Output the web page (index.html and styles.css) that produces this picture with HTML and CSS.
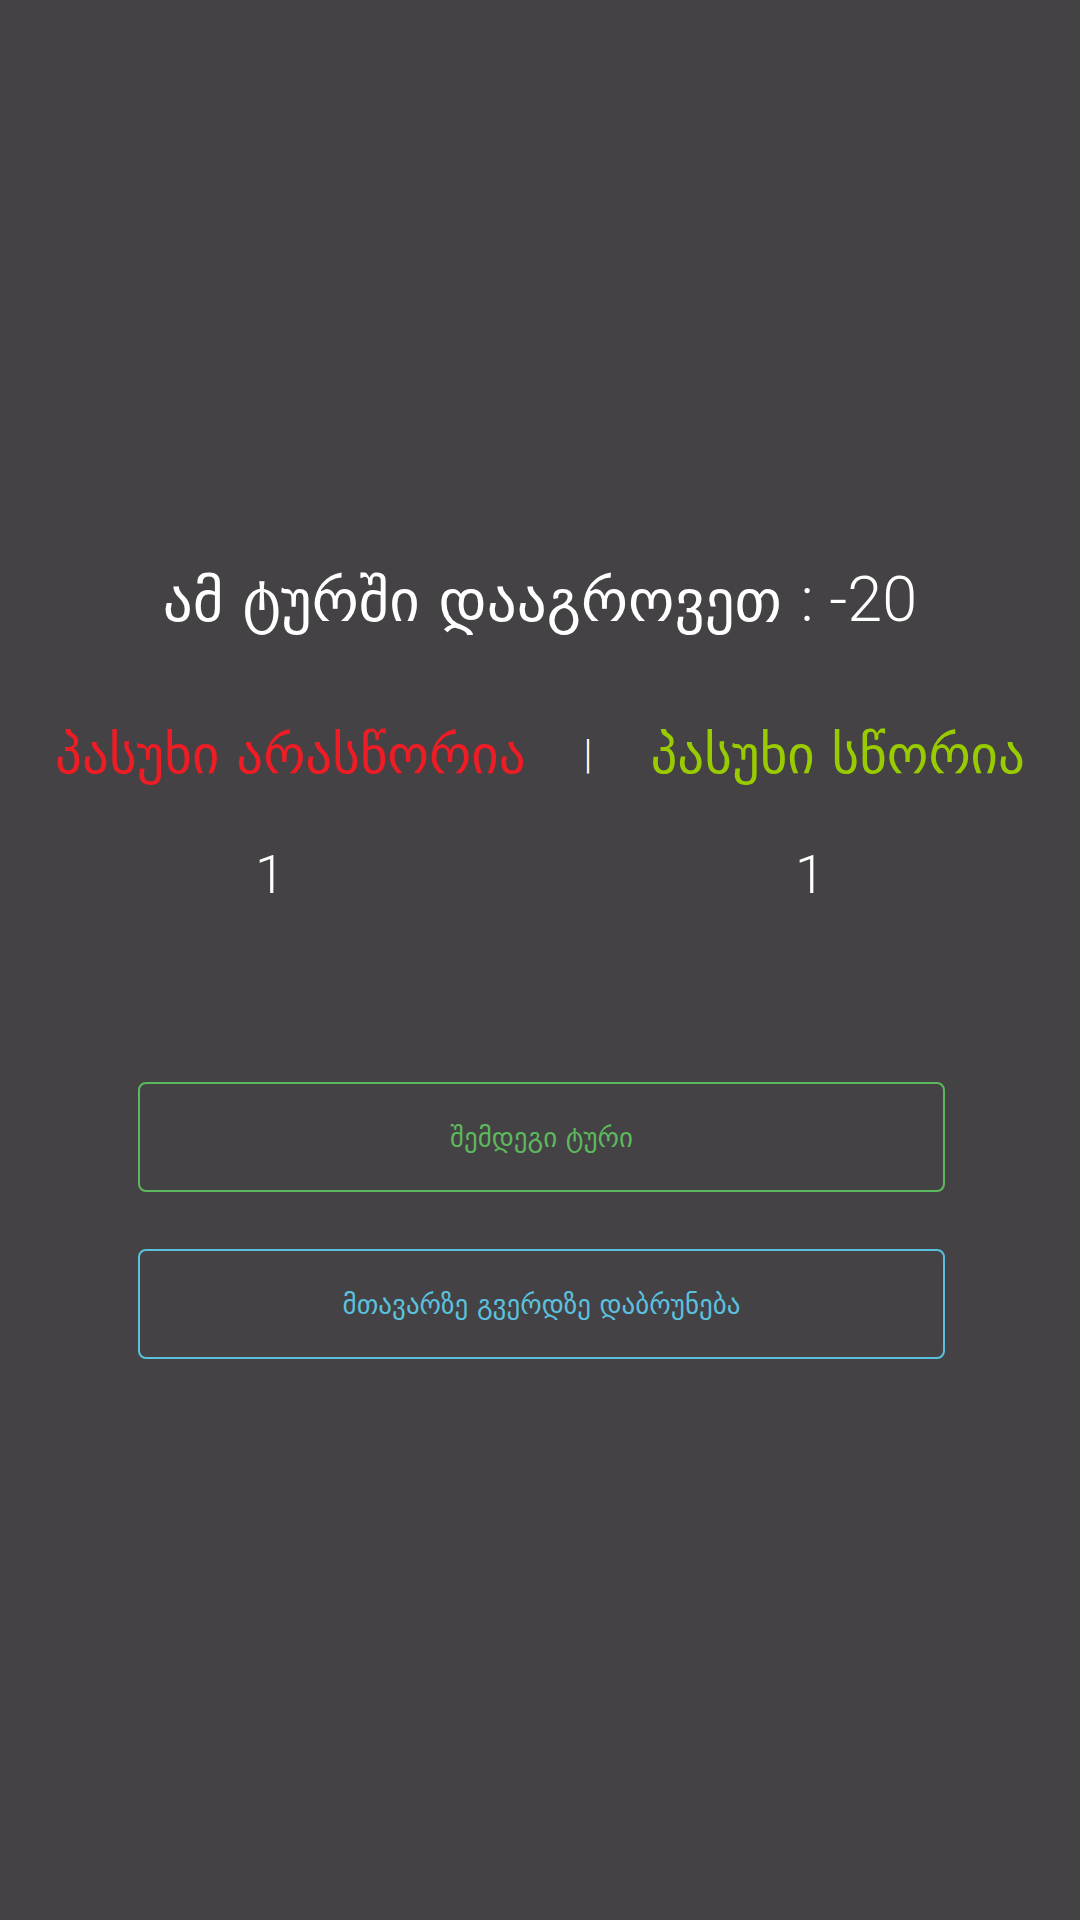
FILE: index.html
```html
<!DOCTYPE html>
<html lang="ka">
<head>
<meta charset="utf-8">
<title>შედეგი</title>
<link rel="stylesheet" href="styles.css">
</head>
<body>
<main class="page">
  <h1 class="score">ამ ტურში დააგროვეთ <span class="num">: -20</span></h1>
  <div class="answers">
    <span class="wrong">პასუხი არასწორია</span>
    <span class="sep">|</span>
    <span class="right">პასუხი სწორია</span>
  </div>
  <div class="counts">
    <span class="count">1</span>
    <span class="count">1</span>
  </div>
  <div class="actions">
    <a class="btn btn-next" href="#">შემდეგი ტური</a>
    <a class="btn btn-home" href="#">მთავარზე გვერდზე დაბრუნება</a>
  </div>
</main>
</body>
</html>
```
FILE: styles.css
```css
html, body {
  margin: 0;
  padding: 0;
  background: #444244;
  height: 100%;
}
body {
  font-family: "DejaVu Sans", sans-serif;
  color: #ffffff;
}
.page {
  padding-top: 560px;
  display: flex;
  flex-direction: column;
  align-items: stretch;
}
.score {
  margin: 0;
  text-align: center;
  font-weight: normal;
  font-size: 59px;
  line-height: 80px;
}
.score .num {
  font-family: Roboto, sans-serif;
  font-weight: 300;
  font-size: 63px;
}
.answers {
  margin-top: 79px;
  display: flex;
  justify-content: center;
  align-items: center;
  font-size: 53px;
  line-height: 70px;
}
.wrong { color: #ee1c25; }
.right { color: #99cc00; }
.sep {
  font-family: Roboto, sans-serif;
  font-weight: 300;
  font-size: 40px;
  color: #ffffff;
  margin: 0 58px;
}
.counts {
  margin-top: 50px;
  display: grid;
  grid-template-columns: 1fr 1fr;
  text-align: center;
  font-family: Roboto, sans-serif;
  font-weight: 300;
  font-size: 54px;
  line-height: 70px;
}
.actions {
  margin: 172px 135px 0 138px;
  display: flex;
  flex-direction: column;
  gap: 57px;
}
.btn {
  display: flex;
  align-items: center;
  justify-content: center;
  height: 106px;
  border: 2px solid;
  border-radius: 8px;
  text-decoration: none;
  font-size: 27px;
}
.btn-next { color: #5cb85c; border-color: #5cb85c; }
.btn-home { color: #5bc0de; border-color: #5bc0de; }
```
